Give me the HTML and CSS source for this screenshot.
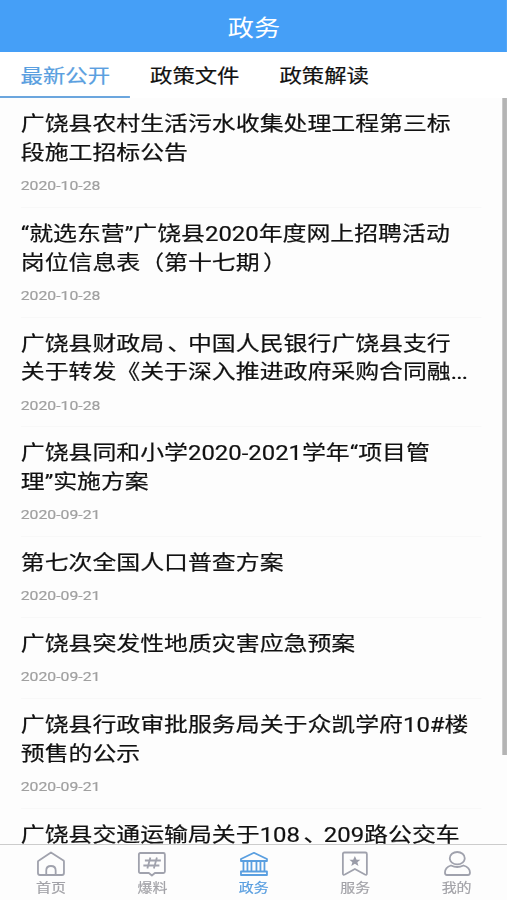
FILE: index.html
```
<!DOCTYPE html>
<html lang="zh-CN">
<head>
	<meta charset="utf-8">
	<title>政务</title>
	<link rel="stylesheet" href="styles.css">
</head>

<body>
	<div class="app">
		<header class="header">政务</header>

		<nav class="tabs">
			<a class="tab active">最新公开</a>
			<a class="tab">政策文件</a>
			<a class="tab">政策解读</a>
		</nav>

		<div class="con">
			<ul class="list">
				<li class="item">
					<h3>广饶县农村生活污水收集处理工程第三标<br>段施工招标公告</h3>
					<p>2020-10-28</p>
				</li>
				<li class="item">
					<h3>“就选东营”广饶县2020年度网上招聘活动<br>岗位信息表（第十七期<span class="mark">）</span></h3>
					<p>2020-10-28</p>
				</li>
				<li class="item">
					<h3>广饶县财政局<span class="mark">、</span>中国人民银行广饶县支行<br>关于转发《关于深入推进政府采购合同融<span class="more">...</span></h3>
					<p>2020-10-28</p>
				</li>
				<li class="item">
					<h3>广饶县同和小学2020-2021学年“项目管<br>理”实施方案</h3>
					<p>2020-09-21</p>
				</li>
				<li class="item">
					<h3>第七次全国人口普查方案</h3>
					<p>2020-09-21</p>
				</li>
				<li class="item">
					<h3>广饶县突发性地质灾害应急预案</h3>
					<p>2020-09-21</p>
				</li>
				<li class="item">
					<h3>广饶县行政审批服务局关于众凯学府10#楼<br>预售的公示</h3>
					<p>2020-09-21</p>
				</li>
				<li class="item last">
					<h3>广饶县交通运输局关于108<span class="mark">、</span>209路公交车</h3>
				</li>
			</ul>
			<div class="scrollbar"></div>
		</div>

		<footer class="footer">
			<a class="menu">
				<svg viewBox="0 0 30 26" preserveAspectRatio="none">
					<path d="M3 9.5 L15 1.5 L27.5 9.5 Q28 10 28 10.5 V22 Q28 24 26 24 H4 Q2 24 2 22 V10.5 Q2 10 3 9.5 Z"/>
					<path d="M10.3 24 V19.5 Q10.3 15 15 15 Q19.7 15 19.7 19.5 V24"/>
				</svg>
				<span>首页</span>
			</a>
			<a class="menu">
				<svg viewBox="0 0 30 26" preserveAspectRatio="none">
					<path d="M3.5 2 H26.5 Q28 2 28 3.5 V20.5 Q28 22 26.5 22 H18 L15 24.5 L12 22 H3.5 Q2 22 2 20.5 V3.5 Q2 2 3.5 2 Z"/>
					<path d="M8 9.5 H24 M6.5 14.5 H22.5 M13.5 6.5 L10.5 17.5 M20 6.5 L17 17.5"/>
				</svg>
				<span>爆料</span>
			</a>
			<a class="menu on">
				<svg viewBox="0 0 30 26" preserveAspectRatio="none">
					<path d="M2 8 L15 1.8 L28 8 V10 H2 Z"/>
					<path d="M4.5 10 V20 M8.5 10 V20 M12.5 10 V20 M17.5 10 V20 M21.5 10 V20 M25.5 10 V20"/>
					<path d="M2 20.5 H28 V24 H2 Z"/>
				</svg>
				<span>政务</span>
			</a>
			<a class="menu">
				<svg viewBox="0 0 30 26" preserveAspectRatio="none">
					<path d="M4.5 1.5 H25.5 Q27 1.5 27 3 V22.5 Q27 24.5 25 23.5 L15 18 L5 23.5 Q3 24.5 3 22.5 V3 Q3 1.5 4.5 1.5 Z"/>
					<path class="fill" d="M15 5 L16.7 8.700 L20.500 8.700 L17.500 11.200 L18.600 15 L15 12.800 L11.400 15 L12.500 11.200 L9.500 8.700 L13.300 8.700 Z"/>
				</svg>
				<span>服务</span>
			</a>
			<a class="menu">
				<svg viewBox="0 0 30 26" preserveAspectRatio="none">
					<ellipse cx="15.3" cy="7.2" rx="7.5" ry="6.2"/>
					<path d="M9 14.5 Q15.3 17.5 21.5 14.5 Q28 16.5 28 21.5 Q28 24 26 24 H5 Q3 24 3 21.5 Q3 16.5 9 14.5 Z"/>
				</svg>
				<span>我的</span>
			</a>
		</footer>
	</div>
</body>
</html>
```

FILE: styles.css
```
* {
	padding: 0;
	margin: 0;
	box-sizing: border-box;
}
html, body {
	width: 507px;
	height: 900px;
	overflow: hidden;
	background-color: #fdfdfd;
}
/* 横向拉伸的页面 */
.app {
	display: flex;
	flex-direction: column;
	width: 437.07px;
	height: 900px;
	transform: scaleX(1.16);
	transform-origin: 0 0;
	font-family: Roboto, "Noto Sans CJK SC", sans-serif;
	color: #111;
}
.header {
	flex: none;
	height: 52px;
	padding-left: 1px;
	line-height: 58px;
	font-size: 22.6px;
	text-align: center;
	color: #fff;
	background-color: #459ff7;
}
.tabs {
	display: flex;
	flex: none;
	height: 46px;
	background-color: #fff;
}
.tab {
	width: 111.6px;
	padding-left: 1px;
	line-height: 49px;
	font-size: 19.3px;
	text-align: center;
	white-space: nowrap;
	-webkit-text-stroke: 0.2px;
}
.tab.active {
	color: #5a9fe0;
	border-bottom: 2px solid #6ba6de;
}
.con {
	display: flex;
	flex: 1;
	min-height: 0;
	overflow: hidden;
}
.list {
	flex: 1;
	padding: 0 17.9px;
	list-style: none;
}
.item {
	padding: 12px 0 12.8px;
	border-bottom: 1px solid #f8f8f8;
}
.item.last {
	height: 46px;
	padding-bottom: 0;
	border-bottom: none;
}
.item h3 {
	font-size: 20.6px;
	font-weight: normal;
	line-height: 28.8px;
	white-space: nowrap;
	-webkit-text-stroke: 0.2px;
}
.item p {
	margin-top: 8.4px;
	font-size: 13.6px;
	line-height: 18px;
	color: #a0a0a0;
	-webkit-text-stroke: 0.2px;
}
/* 标点居中 */
.mark {
	margin-left: 3px;
	margin-right: -3px;
}
.more {
	letter-spacing: -0.7px;
}
.scrollbar {
	flex: none;
	width: 4.5px;
	height: 657px;
	background-color: #b4b4b4;
}
.footer {
	display: flex;
	flex: none;
	height: 56px;
	border-top: 1px solid #ccc;
	background-color: #fdfdfd;
}
.menu {
	display: flex;
	flex: 1;
	flex-direction: column;
	align-items: center;
	padding-top: 5.5px;
	padding-left: 0.6px;
	font-size: 12.9px;
	line-height: 22px;
	color: #a3a3a8;
	-webkit-text-stroke: 0.2px;
}
.menu svg {
	width: 25.86px;
	height: 26px;
	fill: none;
	stroke: #a0a2ad;
	stroke-width: 1.8;
	stroke-linejoin: round;
}
.menu .fill {
	fill: #9a9ca8;
	stroke: none;
}
.menu.on {
	color: #5a9fe0;
}
.menu.on svg {
	stroke: #5a9fe0;
}
```
